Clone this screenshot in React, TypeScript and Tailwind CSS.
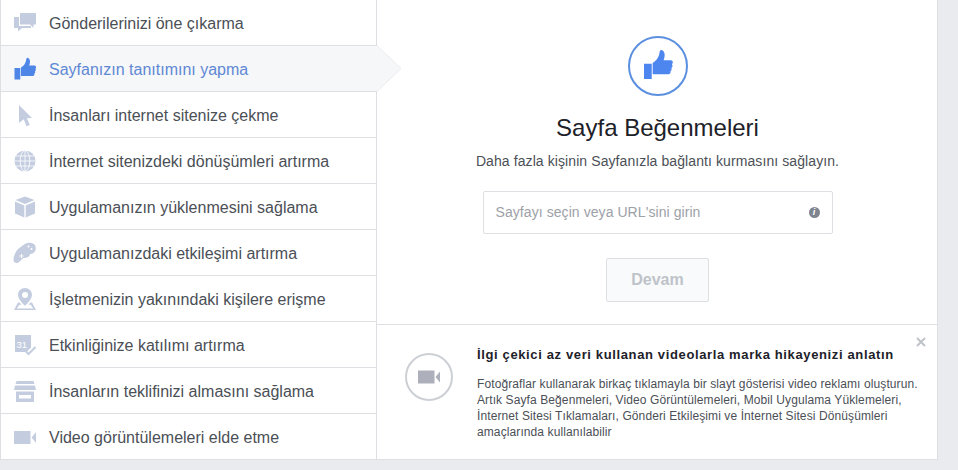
import type { ReactNode } from 'react'

const FONT = "font-['Liberation_Sans',Arial,sans-serif]"

const THUMB = 'M1.500 11h5.800v11.500H1.500z M8 10.500c2.500-1.500 4-3.500 4.800-6 .3-1.100.3-2.300.7-3.100.3-.6 1-.8 1.700-.4 1.800 1 2.100 3.400 1.600 5.400l-.6 2.100h5.300c1.200 0 1.900 1 1.500 2l-.5 1.100c.5.6.5 1.400.1 2l-.6.7c.4.600.3 1.300-.1 1.800l-.6.600c.3.600.1 1.300-.3 1.700-.3.300-.7.500-1.200.5H8z'

function Glyph({ children, className }: { children: ReactNode; className?: string }) {
  return (
    <svg viewBox="0 0 24 24" className={className ?? 'w-6 h-6 shrink-0 text-[#c4cde0]'} fill="currentColor">
      {children}
    </svg>
  )
}

const items: { label: string; icon: ReactNode; active?: boolean }[] = [
  {
    label: 'Gönderilerinizi öne çıkarma',
    icon: (
      <Glyph>
        <path d="M1 6h5v9h12v2H9l-4 3.500V17H1z" />
        <path d="M7 2h16v11.500h-2.500V17l-3.500-3.500H7z" />
      </Glyph>
    ),
  },
  {
    label: 'Sayfanızın tanıtımını yapma',
    active: true,
    icon: (
      <Glyph className="w-6 h-6 shrink-0 text-[#4e86e8]">
        <path d={THUMB} />
      </Glyph>
    ),
  },
  {
    label: 'İnsanları internet sitenize çekme',
    icon: (
      <Glyph>
        <path d="M6 2l13 13-5.200.2 3 6.800-3.300 1.200-2.800-6.900L6 20z" />
      </Glyph>
    ),
  },
  {
    label: 'İnternet sitenizdeki dönüşümleri artırma',
    icon: (
      <Glyph>
        <circle cx="12" cy="12" r="10.500" />
        <g fill="none" stroke="#fff" strokeWidth="0.800">
          <ellipse cx="12" cy="12" rx="4.800" ry="10.500" />
          <path d="M12 1.500v21M1.500 12h21M3 7h18M3 17h18" />
        </g>
      </Glyph>
    ),
  },
  {
    label: 'Uygulamanızın yüklenmesini sağlama',
    icon: (
      <Glyph>
        <path d="M12 1.500l9.500 3.500L12 9 2.500 5z" />
        <path d="M2 6.500l9.300 4v12L2 18.500z" />
        <path d="M22 6.500l-9.300 4v12l9.300-4z" />
      </Glyph>
    ),
  },
  {
    label: 'Uygulamanızdaki etkileşimi artırma',
    icon: (
      <Glyph>
        <path d="M11 3.500c3-2.500 8-2.500 10.500 0 2 2.500 1.500 6-.5 8-1 1-2.500 1.500-3.500 1.200-.8 1.800-1.800 3.300-3.500 3.800-2 .5-3 .3-4 .8-2 1.800-4 4.500-6 4.700-2 .2-3.500-1-3.500-3.500 0-3.500 2-7.500 4.500-10.500z" />
        <circle cx="15.500" cy="5.500" r="1" fill="#fff" />
        <circle cx="18.500" cy="8" r="1" fill="#fff" />
        <path d="M6.500 15h4M8.500 13v4" stroke="#fff" strokeWidth="1" />
      </Glyph>
    ),
  },
  {
    label: 'İşletmenizin yakınındaki kişilere erişme',
    icon: (
      <Glyph>
        <path
          fillRule="evenodd"
          d="M12 1c-3.900 0-7 3-7 6.800 0 4.200 4.500 8.500 7 11.200 2.500-2.700 7-7 7-11.200C19 4 15.900 1 12 1zm0 4a3 3 0 110 6 3 3 0 010-6z"
        />
        <path d="M5 15.500h1.500l2 2.300H6.300L3.800 21.500h16.400l-2.500-3.700h-2.200l2-2.300H19l4 7.500H1z" />
      </Glyph>
    ),
  },
  {
    label: 'Etkinliğinize katılımı artırma',
    icon: (
      <Glyph>
        <path d="M2 2h16v12.500l-4.500 4.500H2z" />
        <text x="3.500" y="14.500" fontSize="9.500" fill="#fff" fontFamily="Liberation Sans, sans-serif">
          31
        </text>
        <path d="M12.500 18l3 3L22.500 14" fill="none" stroke="currentColor" strokeWidth="2" />
      </Glyph>
    ),
  },
  {
    label: 'İnsanların teklifinizi almasını sağlama',
    icon: (
      <Glyph>
        <path d="M3.500 2h17l1 3h-19z" />
        <path d="M2 6.500h20L23 11H1z" />
        <path fillRule="evenodd" d="M3 12.500h18V23H3zm3 3.500v3.500h12V16z" />
      </Glyph>
    ),
  },
  {
    label: 'Video görüntülemeleri elde etme',
    icon: (
      <Glyph>
        <path d="M1 6h16.500v13H1z" />
        <path d="M23 7v11l-4.500-5.500z" />
      </Glyph>
    ),
  },
]

function SideRow({ label, icon, active }: { label: string; icon: ReactNode; active?: boolean }) {
  return (
    <div
      className={
        active
          ? 'relative h-[46px] flex items-center gap-3 pl-3 border-b border-[#dddfe2] bg-[#f6f7f9] text-[#5f88d4]'
          : 'h-[46px] flex items-center gap-3 pl-3 border-b border-[#dddfe2] text-[#4b4f56]'
      }
    >
      {icon}
      <span className="pt-0.5 text-[16px] leading-5">{label}</span>
      {active && (
        <svg viewBox="0 0 26 47" className="absolute left-[375px] -top-px w-[26px] h-[47px]">
          <path d="M0 1h1l24 22.500L1 46H0z" fill="#f6f7f9" />
          <path d="M1 0.500l24 23L1 46.500" fill="none" stroke="#e9ebee" />
        </svg>
      )}
    </div>
  )
}

export default function App() {
  return (
    <div className={`${FONT} w-[958px] h-[470px] overflow-hidden bg-[#e9ebee]`}>
      <div className="w-[938px] h-[460px] flex bg-white border-x border-b border-[#dddfe2]">
        <aside className="w-[376px] shrink-0 border-r border-[#dddfe2]">
          {items.map(item => (
            <SideRow key={item.label} {...item} />
          ))}
        </aside>

        <main className="flex-1 flex flex-col min-w-0">
          <section className="h-[325px] shrink-0 flex flex-col items-center pl-px pt-9 border-b border-[#dddfe2]">
            <div className="w-[60px] h-[60px] rounded-full border-2 border-[#5b8fe0] flex items-center justify-center">
              <Glyph className="w-[32px] h-[32px] text-[#4e86f0] -mt-0.5">
                <path d={THUMB} />
              </Glyph>
            </div>
            <h1 className="mt-[17px] text-[24px] leading-[30px] text-[#1d2129]">Sayfa Beğenmeleri</h1>
            <p className="mt-[9px] text-[14px] leading-[18px] tracking-[0.09px] text-[#4b4f56]">
              Daha fazla kişinin Sayfanızla bağlantı kurmasını sağlayın.
            </p>
            <div className="mt-[21px] w-[350px] h-[43px] flex items-center justify-between pl-3 pr-3 border border-[#dddfe2] rounded-[2px]">
              <span className="text-[14px] tracking-[0.07px] text-[#9da1a8]">Sayfayı seçin veya URL'sini girin</span>
              <span className="w-[11px] h-[11px] rounded-full bg-[#7f8590] text-white text-[9px] leading-[11px] text-center font-bold italic">
                i
              </span>
            </div>
            <button className="mt-6 w-[103px] h-[44px] rounded-[2px] border border-[#dddfe2] bg-[#f9fafb] text-[16px] font-bold text-[#bec3c9]">
              Devam
            </button>
          </section>

          <section className="relative flex-1 flex pl-7 pt-[28px]">
            <div className="w-12 h-12 shrink-0 rounded-full border-2 border-[#ccd0d5] flex items-center justify-center">
              <Glyph className="w-6 h-6 text-[#adb0ba]">
                <path d="M1 5.500h16.500v13H1z" />
                <path d="M23 6.500v11L18.500 12z" />
              </Glyph>
            </div>
            <div className="ml-6 -mt-[7px] w-[446px]">
              <h2 className="text-[13px] leading-[18px] font-bold tracking-[0.63px] text-[#1d2129]">
                İlgi çekici az veri kullanan videolarla marka hikayenizi anlatın
              </h2>
              <p className="mt-[12px] text-[12px] leading-4 tracking-[0.1px] text-[#4b4f56]">
                Fotoğraflar kullanarak birkaç tıklamayla bir slayt gösterisi video reklamı oluşturun.
                <br />
                Artık Sayfa Beğenmeleri, Video Görüntülemeleri, Mobil Uygulama Yüklemeleri,
                <br />
                İnternet Sitesi Tıklamaları, Gönderi Etkileşimi ve İnternet Sitesi Dönüşümleri
                <br />
                amaçlarında kullanılabilir
              </p>
            </div>
            <svg viewBox="0 0 10 10" className="absolute top-[12px] right-[11px] w-[10px] h-[10px] text-[#bec3c9]">
              <path d="M1 1l8 8M9 1l-8 8" stroke="currentColor" strokeWidth="2" />
            </svg>
          </section>
        </main>
      </div>
    </div>
  )
}
